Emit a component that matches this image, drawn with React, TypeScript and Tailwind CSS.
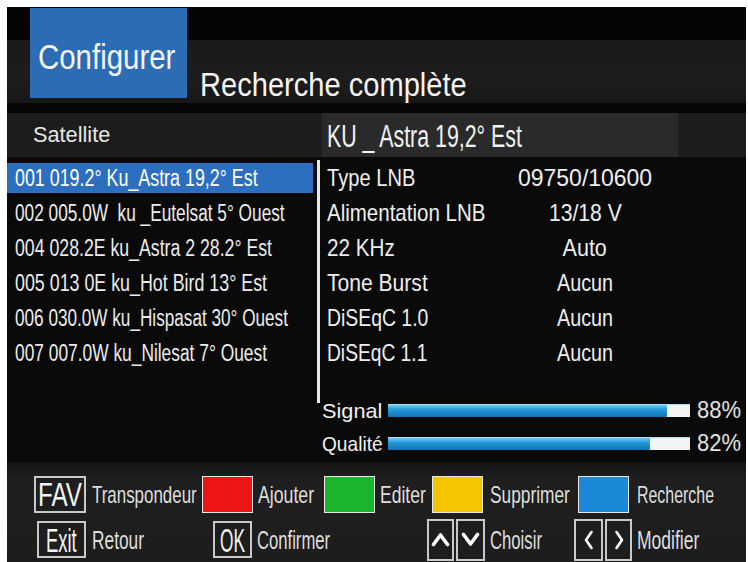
import { useLayoutEffect, useRef, useState } from 'react';

const SATELLITES = [
  { name: '001 019.2° Ku_Astra 19,2° Est', w: 243 },
  { name: '002 005.0W  ku _Eutelsat 5° Ouest', w: 270 },
  { name: '004 028.2E ku_Astra 2 28.2° Est', w: 257 },
  { name: '005 013 0E ku_Hot Bird 13° Est', w: 252 },
  { name: '006 030.0W ku_Hispasat 30° Ouest', w: 273 },
  { name: '007 007.0W ku_Nilesat 7° Ouest', w: 252 },
];

const SETTINGS = [
  { label: 'Type LNB', lw: 88, value: '09750/10600', vw: 134 },
  { label: 'Alimentation LNB', lw: 158, value: '13/18 V', vw: 73 },
  { label: '22 KHz', lw: 68, value: 'Auto', vw: 44 },
  { label: 'Tone Burst', lw: 101, value: 'Aucun', vw: 56 },
  { label: 'DiSEqC 1.0', lw: 101, value: 'Aucun', vw: 56 },
  { label: 'DiSEqC 1.1', lw: 100, value: 'Aucun', vw: 56 },
];

// the box uses a tall condensed face; no narrow font is installed, so squeeze
// Liberation Sans to the measured width
function Fit({ w, center, children }: { w: number; center?: boolean; children: React.ReactNode }) {
  const ref = useRef<HTMLSpanElement>(null);
  const [s, setS] = useState(1);
  useLayoutEffect(() => {
    if (ref.current && ref.current.offsetWidth) setS(w / ref.current.offsetWidth);
  }, [w]);
  return (
    <span
      ref={ref}
      className={`inline-block whitespace-pre leading-none ${center ? 'origin-center' : 'origin-left'}`}
      style={{ transform: `scaleX(${s})` }}
    >
      {children}
    </span>
  );
}

function KeyBox({ children, className }: { children: React.ReactNode; className: string }) {
  return (
    <div className={`shrink-0 border-2 border-[#c9c9c9] flex items-center justify-center text-[#f2f2f2] ${className}`}>
      {children}
    </div>
  );
}

function ColorKey({ color }: { color: string }) {
  return <div className={`shrink-0 h-[37px] w-[51px] border border-[#e8e8e8] ${color}`} />;
}

function Label({ w, className, children }: { w: number; className: string; children: React.ReactNode }) {
  return (
    <div className={`shrink-0 flex ${className}`}>
      <Fit w={w}>{children}</Fit>
    </div>
  );
}

function Arrow({ dir }: { dir: 'up' | 'down' | 'left' | 'right' }) {
  if (dir === 'up' || dir === 'down') {
    return (
      <svg width="19" height="15" viewBox="0 0 19 15">
        <polyline
          points={dir === 'up' ? '2.5,12.5 9.5,3 16.5,12.5' : '2.5,2.5 9.5,12 16.5,2.5'}
          fill="none" stroke="#ffffff" strokeWidth="3.6" strokeLinecap="round" strokeLinejoin="round"
        />
      </svg>
    );
  }
  return (
    <svg width="12" height="20" viewBox="0 0 12 20">
      <polyline
        points={dir === 'left' ? '8.5,2 3,10 8.5,18' : '3.5,2 9,10 3.5,18'}
        fill="none" stroke="#ffffff" strokeWidth="2.6" strokeLinecap="round" strokeLinejoin="round"
      />
    </svg>
  );
}

function Meter({ label, lw, fill, pct }: { label: string; lw: number; fill: number; pct: string }) {
  return (
    <div className="flex items-center h-[24px]">
      <div className="w-[66px] flex text-[21px] text-[#f0f0f0]">
        <Fit w={lw}>{label}</Fit>
      </div>
      <div className="w-[302px] h-[13px] bg-[#f4f4f4] flex border-t border-[#a9dcf5]">
        <div className="h-full bg-[linear-gradient(to_bottom,#6fcaf3,#2298d8_40%,#1672b2)]" style={{ width: fill }} />
      </div>
      <div className="pl-[7px] flex text-[23px] text-[#e2e2e2]">
        <Fit w={44}>{pct}</Fit>
      </div>
    </div>
  );
}

export default function App() {
  return (
    <div className="w-[748px] h-[562px] bg-white pt-[7px] pl-[7px] pr-[2px] overflow-hidden leading-none font-['Liberation_Sans',Arial,sans-serif]">
      <div className="h-full flex flex-col bg-[#0a0a0a] overflow-hidden">
        {/* header */}
        <div className="h-[96px] flex items-start bg-[linear-gradient(to_bottom,#050505_0px,#050505_33px,#1a1a1a_33px,#1d1d1d_70px,#171717_96px)]">
          <div className="ml-[23px] mt-[1px] w-[157px] h-[90px] bg-[#2b6cb4] pl-[8px] pt-[31px] flex items-start text-[35px] text-[#f4f4f4]">
            <Fit w={137}>Configurer</Fit>
          </div>
          <div className="ml-[13px] mt-[61px] flex text-[33px] text-[#f4f4f4]">
            <Fit w={267}>Recherche complète</Fit>
          </div>
        </div>
        <div className="h-[10px] bg-[#070707]" />

        {/* satellite band */}
        <div className="h-[44px] flex bg-[#1c1c1c]">
          <div className="w-[315px] pl-[26px] flex items-center text-[22px] text-[#e6e6e6]">
            <Fit w={77}>Satellite</Fit>
          </div>
          <div className="w-[356px] pl-[5px] pt-[2px] flex items-center bg-[#2a2a2a] text-[31px] text-[#f2f2f2]">
            <Fit w={195}>KU _ Astra 19,2° Est</Fit>
          </div>
        </div>

        {/* main */}
        <div className="h-[305px] flex">
          <div className="w-[306px] pt-[3px]">
            {SATELLITES.map((s, i) => (
              <div key={s.name} className="h-[35px] flex items-center">
                <div className={`h-[30px] w-full flex items-center pl-[8px] pt-[1px] text-[23px] ${i === 0 ? 'bg-[#2d6fbf] text-white' : 'text-[#ececec]'}`}>
                  <Fit w={s.w}>{s.name}</Fit>
                </div>
              </div>
            ))}
          </div>
          <div className="ml-[4px] mt-[3px] w-[3px] h-[243px] bg-[#e8e8e8]" />
          <div className="flex-1 pt-[3px]">
            {SETTINGS.map((r) => (
              <div key={r.label} className="h-[35px] pl-[7px] flex items-center text-[24px] text-[#eeeeee]">
                <div className="w-[180px] flex">
                  <Fit w={r.lw}>{r.label}</Fit>
                </div>
                <div className="w-[156px] flex justify-center">
                  <Fit w={r.vw} center>{r.value}</Fit>
                </div>
              </div>
            ))}
            <div className="mt-[28px] pl-[2px]">
              <Meter label="Signal" lw={60} fill={279} pct="88%" />
              <div className="h-[9px]" />
              <Meter label="Qualité" lw={61} fill={262} pct="82%" />
            </div>
          </div>
        </div>

        {/* legend */}
        <div className="flex-1 bg-[linear-gradient(to_bottom,#131413,#1e1f1e_18px,#1c1d1c)] pt-[14px] text-[#dedede]">
          <div className="h-[37px] flex items-center text-[24px]">
            <KeyBox className="h-full ml-[27px] w-[52px] text-[33px]">
              <Fit w={44} center>FAV</Fit>
            </KeyBox>
            <Label w={105} className="w-[116px] pl-[6px]">Transpondeur</Label>
            <ColorKey color="bg-[#f01515]" />
            <Label w={56} className="w-[71px] pl-[5px]">Ajouter</Label>
            <ColorKey color="bg-[#1cb62c]" />
            <Label w={46} className="w-[57px] pl-[5px]">Editer</Label>
            <ColorKey color="bg-[#f6c500]" />
            <Label w={80} className="w-[95px] pl-[7px]">Supprimer</Label>
            <ColorKey color="bg-[#1c88d8]" />
            <Label w={77} className="pl-[8px]">Recherche</Label>
          </div>
          <div className="h-[37px] mt-[8px] flex items-center text-[26px]">
            <KeyBox className="h-full ml-[30px] w-[49px] text-[34px]">
              <Fit w={31} center>Exit</Fit>
            </KeyBox>
            <Label w={52} className="w-[127px] pl-[6px]">Retour</Label>
            <KeyBox className="h-full w-[39px] text-[34px]">
              <Fit w={25} center>OK</Fit>
            </KeyBox>
            <Label w={73} className="w-[175px] pl-[5px]">Confirmer</Label>
            <KeyBox className="w-[27px] h-[42px]">
              <Arrow dir="up" />
            </KeyBox>
            <KeyBox className="ml-[2px] w-[29px] h-[42px]">
              <Arrow dir="down" />
            </KeyBox>
            <Label w={52} className="w-[89px] pl-[5px]">Choisir</Label>
            <KeyBox className="w-[29px] h-[42px]">
              <Arrow dir="left" />
            </KeyBox>
            <KeyBox className="ml-[2px] w-[27px] h-[42px]">
              <Arrow dir="right" />
            </KeyBox>
            <Label w={62} className="pl-[5px]">Modifier</Label>
          </div>
        </div>
      </div>
    </div>
  );
}
